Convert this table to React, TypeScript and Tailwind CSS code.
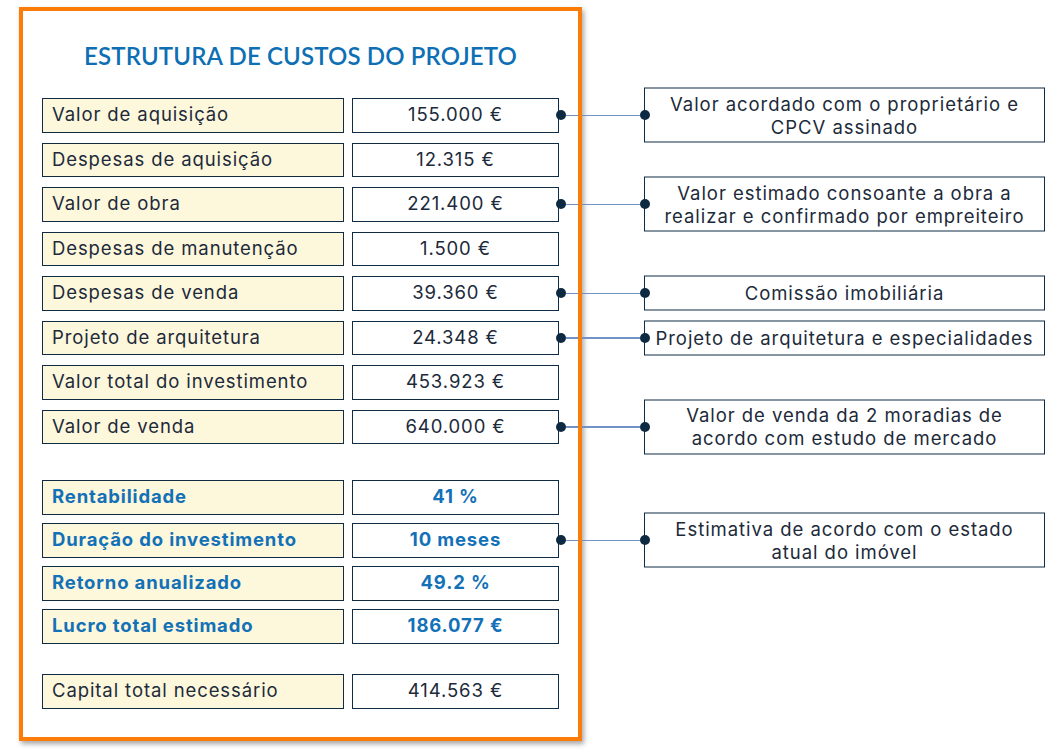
import React from "react";

type Row = {
  label: string;
  value: string;
  note?: string[];
};

const costs: Row[] = [
  {
    label: "Valor de aquisição",
    value: "155.000 €",
    note: ["Valor acordado com o proprietário e", "CPCV assinado"],
  },
  { label: "Despesas de aquisição", value: "12.315 €" },
  {
    label: "Valor de obra",
    value: "221.400 €",
    note: ["Valor estimado consoante a obra a", "realizar e confirmado por empreiteiro"],
  },
  { label: "Despesas de manutenção", value: "1.500 €" },
  { label: "Despesas de venda", value: "39.360 €", note: ["Comissão imobiliária"] },
  {
    label: "Projeto de arquitetura",
    value: "24.348 €",
    note: ["Projeto de arquitetura e especialidades"],
  },
  { label: "Valor total do investimento", value: "453.923 €" },
  {
    label: "Valor de venda",
    value: "640.000 €",
    note: ["Valor de venda da 2 moradias de", "acordo com estudo de mercado"],
  },
];

const results: Row[] = [
  { label: "Rentabilidade", value: "41 %" },
  {
    label: "Duração do investimento",
    value: "10 meses",
    note: ["Estimativa de acordo com o estado", "atual do imóvel"],
  },
  { label: "Retorno anualizado", value: "49.2 %" },
  { label: "Lucro total estimado", value: "186.077 €" },
];

// callout: dot on the value box, line through the card border, dot on the note box
const Callout: React.FC<{ lines: string[] }> = ({ lines }) => (
  <>
    <div className="absolute left-[514px] top-1/2 z-10 flex h-[10px] w-[94px] -translate-y-1/2 items-center">
      <span className="h-[10px] w-[10px] shrink-0 rounded-full bg-[#0e2a42]" />
      <span className="h-[1.5px] flex-1 bg-[#7092c4]" />
      <span className="h-[10px] w-[10px] shrink-0 rounded-full bg-[#0e2a42]" />
    </div>
    <div
      className={`absolute left-[602px] top-1/2 flex w-[401px] -translate-y-1/2 flex-col items-center justify-center border-[1.5px] border-[#0f2c44] bg-white text-[18.5px] leading-[23px] tracking-[0.95px] text-[#1c2a3a] ${
        lines.length > 1 ? "h-[55px]" : "h-[35px]"
      }`}
    >
      {lines.map((l) => (
        <span key={l} className="whitespace-nowrap">
          {l}
        </span>
      ))}
    </div>
  </>
);

const TableRow: React.FC<{ row: Row; strong?: boolean }> = ({ row, strong }) => {
  const tone = strong
    ? "font-bold tracking-[0.85px] text-[#1371b7]"
    : "tracking-[0.9px] text-[#1c2a3a]";
  return (
    <div className="relative flex h-[34.5px] gap-2">
      <div
        className={`flex w-[302px] items-center border-[1.5px] border-[#0f2c44] bg-[#fdf7dc] pl-[9px] text-[18.5px] ${tone}`}
      >
        {row.label}
      </div>
      <div
        className={`flex w-[207px] items-center justify-center border-[1.5px] border-[#0f2c44] bg-white text-[18.5px] ${tone}`}
      >
        {row.value}
      </div>
      {row.note && <Callout lines={row.note} />}
    </div>
  );
};

export default function App() {
  return (
    <div className="min-h-[750px] w-[1062px] bg-white pl-[19px] pt-[7px] font-['Inter',sans-serif]">
      <div className="relative h-[734px] w-[563px] pl-[23px] pt-[37px] shadow-[2px_3px_5px_rgba(0,0,0,0.35)]">
        {/* orange frame sits above the callout lines */}
        <div className="pointer-events-none absolute inset-0 z-20 border-4 border-[#fb7c06]" />

        <h1 className="h-[24px] w-[517px] text-center font-['Lato',sans-serif] text-[24px] font-semibold leading-none tracking-[0.15px] text-[#0e6fb4]">
          ESTRUTURA DE CUSTOS DO PROJETO
        </h1>

        <div className="mt-[30px] flex flex-col gap-[10px]">
          {costs.map((r) => (
            <TableRow key={r.label} row={r} />
          ))}
        </div>

        <div className="mt-[36px] flex flex-col gap-[8.5px]">
          {results.map((r) => (
            <TableRow key={r.label} row={r} strong />
          ))}
        </div>

        <div className="mt-[30.5px]">
          <TableRow row={{ label: "Capital total necessário", value: "414.563 €" }} />
        </div>
      </div>
    </div>
  );
}
